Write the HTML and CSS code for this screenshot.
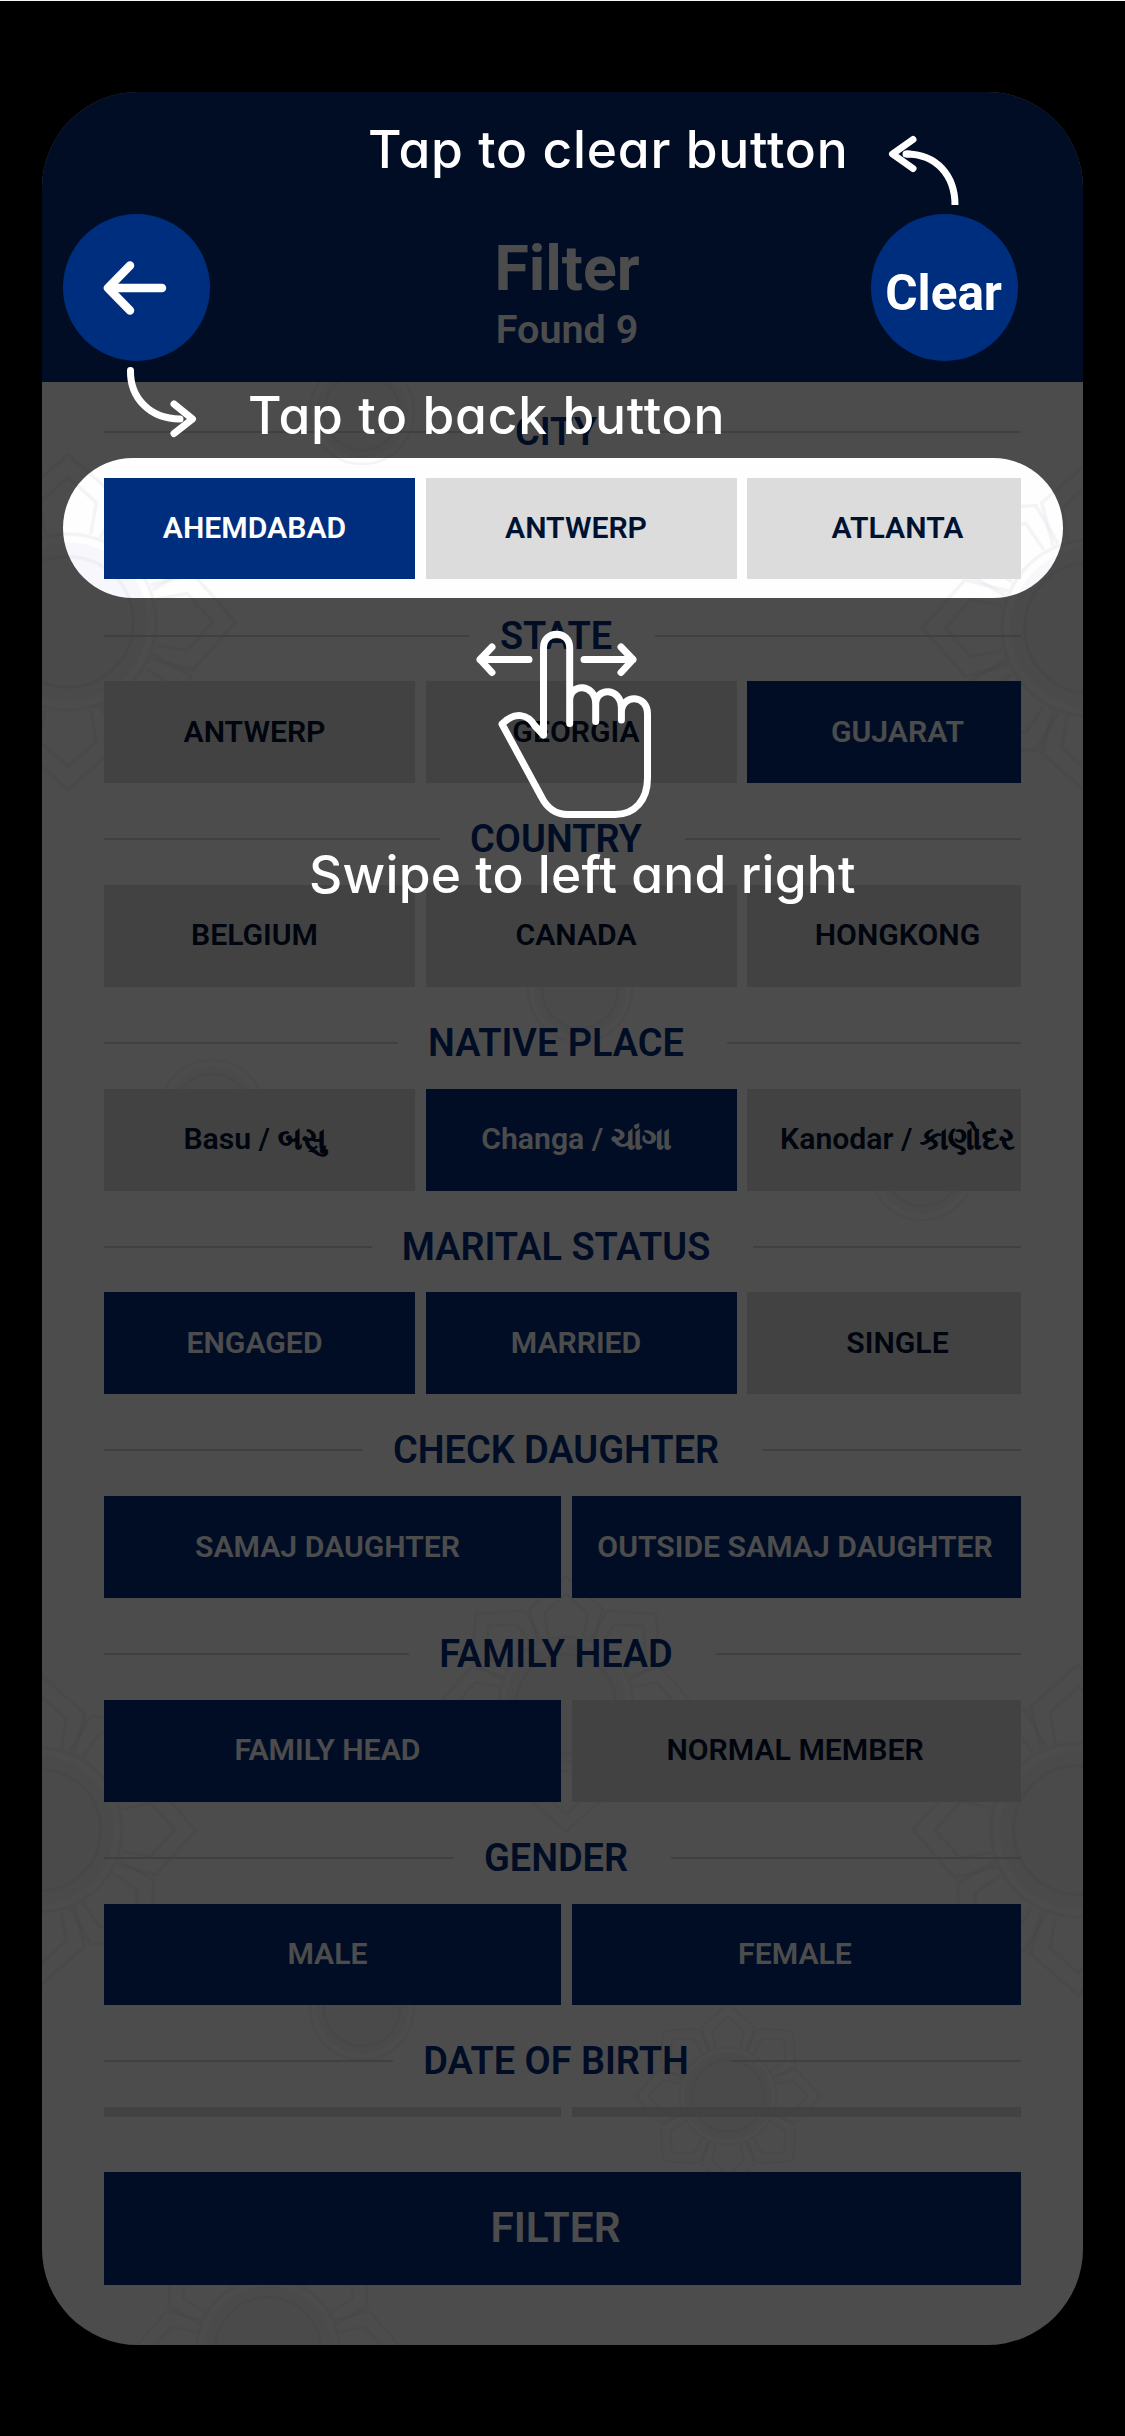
FILE: index.html
```
<!DOCTYPE html>
<html lang="en">
<head>
<meta charset="utf-8">
<title>Filter</title>
<link rel="stylesheet" href="styles.css">
</head>
<body>
<main class="screen">
  <svg class="pattern" viewBox="42 92 1041 2253" aria-hidden="true">
    <defs>
      <g id="petal">
        <path d="M-26 -58 L-34 -88 L0 -118 L34 -88 L26 -58"/>
        <path d="M-16 -62 L-20 -84 L0 -102 L20 -84 L16 -62"/>
      </g>
      <g id="flower">
        <circle class="pattern-core" r="56"/>
        <circle r="46"/>
        <circle r="62"/>
        <use href="#petal"/>
        <use href="#petal" transform="rotate(45)"/>
        <use href="#petal" transform="rotate(90)"/>
        <use href="#petal" transform="rotate(135)"/>
        <use href="#petal" transform="rotate(180)"/>
        <use href="#petal" transform="rotate(225)"/>
        <use href="#petal" transform="rotate(270)"/>
        <use href="#petal" transform="rotate(315)"/>
      </g>
      <g id="disc"><circle class="pattern-core" r="46"/><circle r="38"/><circle r="52"/></g>
    </defs>
    <use href="#flower" transform="translate(68 622) scale(1.42)"/>
    <use href="#flower" transform="translate(1090 628) scale(1.42)"/>
    <use href="#disc" transform="translate(362 412)"/>
    <use href="#disc" transform="translate(580 990)"/>
    <use href="#disc" transform="translate(212 1112)"/>
    <use href="#disc" transform="translate(922 1168)"/>
    <use href="#flower" transform="translate(566 1704) scale(1.08)"/>
    <use href="#flower" transform="translate(40 1830) scale(1.32)"/>
    <use href="#flower" transform="translate(1078 1830) scale(1.4)"/>
    <use href="#disc" transform="translate(362 2008)"/>
    <use href="#flower" transform="translate(728 2096) scale(.78)"/>
    <use href="#flower" transform="translate(268 2350) scale(1.15)"/>
  </svg>

  <header class="header">
    <svg class="back" viewBox="0 0 72 60" aria-label="Back"><path d="M63 30H9M31 7.500 9 30l22 22.500"/></svg>
    <div class="heading">
      <h1 class="title">Filter</h1>
      <p class="found">Found 9</p>
    </div>
    <span class="clear">Clear</span>
  </header>

  <div class="filters">
    <section class="group">
      <h2 class="group-title">CITY</h2>
      <div class="chips"><div class="chip on">AHEMDABAD</div><div class="chip">ANTWERP</div><div class="chip">ATLANTA</div></div>
    </section>
    <section class="group">
      <h2 class="group-title">STATE</h2>
      <div class="chips"><div class="chip">ANTWERP</div><div class="chip">GEORGIA</div><div class="chip on">GUJARAT</div></div>
    </section>
    <section class="group">
      <h2 class="group-title">COUNTRY</h2>
      <div class="chips"><div class="chip">BELGIUM</div><div class="chip">CANADA</div><div class="chip">HONGKONG</div></div>
    </section>
    <section class="group">
      <h2 class="group-title">NATIVE PLACE</h2>
      <div class="chips"><div class="chip">Basu /&nbsp;<span class="gu" lang="gu">બસુ</span></div><div class="chip on">Changa /&nbsp;<span class="gu" lang="gu">ચાંગા</span></div><div class="chip">Kanodar /&nbsp;<span class="gu" lang="gu">કાણોદર</span></div></div>
    </section>
    <section class="group">
      <h2 class="group-title">MARITAL STATUS</h2>
      <div class="chips"><div class="chip on">ENGAGED</div><div class="chip on">MARRIED</div><div class="chip">SINGLE</div></div>
    </section>
    <section class="group">
      <h2 class="group-title">CHECK DAUGHTER</h2>
      <div class="chips halves"><div class="chip on">SAMAJ DAUGHTER</div><div class="chip on">OUTSIDE SAMAJ DAUGHTER</div></div>
    </section>
    <section class="group">
      <h2 class="group-title">FAMILY HEAD</h2>
      <div class="chips halves"><div class="chip on">FAMILY HEAD</div><div class="chip">NORMAL MEMBER</div></div>
    </section>
    <section class="group">
      <h2 class="group-title">GENDER</h2>
      <div class="chips halves"><div class="chip on">MALE</div><div class="chip on">FEMALE</div></div>
    </section>
    <section class="group">
      <h2 class="group-title">DATE OF BIRTH</h2>
      <div class="chips halves"><div class="chip"></div><div class="chip"></div></div>
    </section>
  </div>

  <div class="submit">FILTER</div>
</main>

<div class="coach">
  <svg class="coach-art" viewBox="0 0 1125 2436" aria-hidden="true">
    <path class="dim" fill-rule="evenodd" d="M42 92H1083V2345H42Z
      M63 287.500a73.500 73.500 0 0 1 147 0a73.500 73.500 0 0 1 -147 0Z
      M871 287.500a73.500 73.500 0 0 1 147 0a73.500 73.500 0 0 1 -147 0Z
      M133 458H993a70 70 0 0 1 0 140H133a70 70 0 0 1 0 -140Z"/>
    <g class="ink">
      <path d="M130.500 370.500C130 398 150 419 180 419M174 404 192.500 419 174 433.500"/>
      <path stroke-linecap="butt" d="M906 154C937 154 955 176 955 205"/>
      <path d="M913 139.500 892.500 154 913 168.500M906 154h3"/>
      <path d="M529 659.500H480M492 647 480 659.500 492 672.500M584 659.500H633M621 647 633 659.500 621 672.500"/>
      <path d="M543.500 735V648C543.500 629.500 569.700 629.500 569.700 648V723.500M569.700 700C570 683 595.500 683 595.700 704V721.500M595.700 704C596 687 621 687 621.400 708V720M621.400 712C622 694 647.500 694 647.500 714V778C647.500 800 635 814.500 615 814.500H568C556 814.500 547 808 541.500 797L502 724C515 711 528 714 535 726L543.500 735"/>
    </g>
  </svg>
  <p class="tip tip-clear">Tap to clear button</p>
  <p class="tip tip-back">Tap to back button</p>
  <p class="tip tip-swipe">Swipe to left and right</p>
</div>
</body>
</html>
```
FILE: styles.css
```
* { box-sizing: border-box; margin: 0; padding: 0; }

body {
  position: relative;
  width: 1125px;
  height: 2436px;
  overflow: hidden;
  padding: 91px 42px 0;
  border-top: 1px solid #f4f6f5;
  background: #000;
  font-family: Roboto, "Noto Sans", sans-serif;
}

.screen {
  position: relative;
  height: 2252.500px;
  overflow: hidden;
  border-radius: 96px;
  background: #fefefe;
}

.pattern { position: absolute; inset: 0; width: 1041px; height: 2253px; }
.pattern circle, .pattern path { fill: none; stroke: #dcdce6; stroke-opacity: .28; stroke-width: 2.500; }
.pattern .pattern-core { fill: #ececfa; fill-opacity: .35; stroke: none; }

.header {
  position: relative;
  display: grid;
  grid-template-columns: 1fr auto 1fr;
  align-items: start;
  height: 290px;
  background: #002e7e;
  color: #fefefe;
}
.back { width: 72px; height: 60px; margin: 166px 0 0 57px; fill: none; stroke: #fff; stroke-width: 8.500; stroke-linecap: round; stroke-linejoin: round; }
.heading { padding: 140px 0 0 9px; text-align: center; }
.title { font-size: 62.500px; font-weight: 700; line-height: 74px; }
.found { font-size: 39.500px; font-weight: 600; line-height: 48px; }
.clear { justify-self: end; margin: 172px 81px 0 0; font-size: 49.500px; font-weight: 700; line-height: 58px; color: #fff; }

.filters {
  position: relative;
  height: 1735px;
  overflow: hidden;
  padding: 28px 62px 0;
}
.group { margin-bottom: 34.200px; }
.group-title {
  display: flex;
  align-items: center;
  margin-bottom: 23.800px;
  color: #002e7e;
  font-size: 37.900px;
  font-weight: 600;
  line-height: 44px;
  white-space: nowrap;
}
.group-title::before, .group-title::after { content: ""; flex: 1; height: 2px; background: #d8d8d8; }
.group-title::before { margin-right: 30px; }
.group-title::after { margin-left: 43px; }

.chips { display: flex; gap: 10.500px; overflow: hidden; }
.chip {
  display: flex;
  flex: 0 0 311px;
  align-items: center;
  justify-content: center;
  height: 101.700px;
  padding: 0 10px 2px 0;
  background: #dcdcdc;
  color: #001232;
  font-size: 30.200px;
  font-weight: 600;
  white-space: nowrap;
}
.halves .chip { flex-basis: 457px; }
.chip.on { background: #002e7e; color: #fefefe; }
.gu { -webkit-text-stroke: .6px currentColor; }

.submit {
  position: relative;
  margin: 54.500px 62px 0;
  padding: 0 14px 2px 0;
  background: #002e7e;
  color: #fefefe;
  font-size: 42.300px;
  font-weight: 600;
  line-height: 111px;
  text-align: center;
}

/* Walkthrough layer drawn over the screen */
.coach { position: absolute; top: -1px; left: 0; width: 1125px; height: 2436px; }
.coach-art { display: block; width: 1125px; height: 2436px; }
.dim { fill: #000; fill-opacity: .7; }
.ink { fill: none; stroke: #fff; stroke-width: 7; stroke-linecap: round; stroke-linejoin: round; }
.tip {
  position: absolute;
  color: #fff;
  font-family: Inter, sans-serif;
  font-size: 51.500px;
  font-weight: 500;
  font-feature-settings: "cv11";
  line-height: 60px;
  letter-spacing: .800px;
  white-space: nowrap;
}
.tip-clear { top: 119px; left: 368px; }
.tip-back { top: 385px; left: 248px; }
.tip-swipe { top: 844px; left: 309px; letter-spacing: .250px; }
```
